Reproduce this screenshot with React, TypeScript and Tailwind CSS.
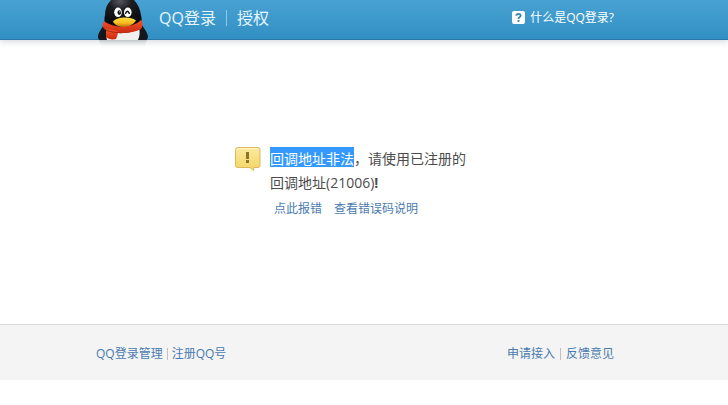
import React from 'react';

const linkStyle = 'text-[#4a7bb0] hover:underline';

function Penguin() {
  return (
    <svg className="w-[50px] h-12 shrink-0" viewBox="0 0 50 48" role="img" aria-label="QQ">
      <defs>
        <radialGradient id="head" cx="42%" cy="5%" r="75%">
          <stop offset="0" stopColor="#54585c" />
          <stop offset="0.4" stopColor="#1c1e22" />
          <stop offset="1" stopColor="#0b0c10" />
        </radialGradient>
        <linearGradient id="beak" x1="0" y1="0" x2="0" y2="1">
          <stop offset="0" stopColor="#ffdd3c" />
          <stop offset="0.6" stopColor="#f9b91e" />
          <stop offset="1" stopColor="#b8690a" />
        </linearGradient>
        <linearGradient id="scarf" x1="0" y1="0" x2="0" y2="1">
          <stop offset="0" stopColor="#f4532a" />
          <stop offset="1" stopColor="#cb2a10" />
        </linearGradient>
        <linearGradient id="reflection" x1="0" y1="0" x2="0" y2="1">
          <stop offset="0" stopColor="#a9b0b4" stopOpacity="0.6" />
          <stop offset="1" stopColor="#ffffff" stopOpacity="0" />
        </linearGradient>
      </defs>
      {/* wings and body */}
      <path d="M7 24C3 29 0 33 0 37C0 38 1 40 2 40H48C49 40 50 38 50 36C49 32 46 28 43 24Z" fill="#15171b" />
      <path d="M13 0C9 4 7 9 7 15C6 19 6 23 8 27H42C44 23 44 19 43 15C42 9 40 4 36 0Z" fill="url(#head)" />
      {/* belly */}
      <path d="M9 30C8 34 8 37 9 40H40C42 36 42 31 41 28C33 34 18 35 9 30Z" fill="#f1f1f2" />
      {/* eyes */}
      <ellipse cx="20" cy="12.3" rx="3.8" ry="4.8" fill="#fff" />
      <ellipse cx="29.8" cy="12.3" rx="3.8" ry="4.8" fill="#fff" />
      <ellipse cx="21.3" cy="12.6" rx="1.8" ry="2.4" fill="#111" />
      <circle cx="21.8" cy="11.8" r="0.6" fill="#fff" />
      <path d="M27.7 13.3Q29 9.3 31.3 13.3" fill="none" stroke="#111" strokeWidth="1.5" strokeLinecap="round" />
      {/* scarf */}
      <path d="M6 21C14 28 34 29 43 20C45 22 45 27 43 29C34 34 17 34 8 30C4 28 4 24 6 21Z" fill="url(#scarf)" />
      <path d="M9 29L20 31C20 34 19 37 18 39C14 40 10 39 8 37C8 34 8 31 9 29Z" fill="url(#scarf)" />
      <path d="M9 30.5Q14 32.5 20 32.5" fill="none" stroke="#97200e" strokeWidth="0.8" />
      {/* beak */}
      <path d="M15 21.5C19 17 32 16 38 20.5C35 25 30 27 26 27C21 27 17 25.5 15 21.5Z" fill="url(#beak)" />
      <path d="M1 40H49L46 48H4Z" fill="url(#reflection)" />
    </svg>
  );
}

function HelpIcon() {
  return (
    <svg className="w-[13px] h-[13px]" viewBox="0 0 13 13" aria-hidden="true">
      <rect width="13" height="13" rx="2" fill="#fff" />
      <path d="M4.3 4.8Q4.3 3 6.5 3T8.7 4.7C8.7 6 6.5 6.1 6.5 7.9" fill="none" stroke="#3b88ba" strokeWidth="1.8" />
      <rect x="5.5" y="9" width="2" height="1.8" fill="#3b88ba" />
    </svg>
  );
}

function WarningIcon() {
  return (
    <svg className="w-[26px] h-6 shrink-0" viewBox="0 0 26 24" aria-hidden="true">
      <defs>
        <linearGradient id="bubble" x1="0" y1="0" x2="0" y2="1">
          <stop offset="0" stopColor="#fbeaa0" />
          <stop offset="1" stopColor="#f3d565" />
        </linearGradient>
      </defs>
      <path
        d="M2.5 0.5H23Q25 0.5 25 2.5V18.5Q25 20.5 23 20.5H19L18.5 23.5L15 20.5H2.5Q0.5 20.5 0.5 18.5V2.5Q0.5 0.5 2.5 0.5Z"
        fill="url(#bubble)"
        stroke="#dcb95c"
      />
      <path d="M2.5 1.5H23" stroke="#fff5cc" />
      <path d="M11 5H14V12H11Z" fill="#8d7528" />
      <rect x="11" y="13" width="3" height="3" fill="#8d7528" />
    </svg>
  );
}

export default function App() {
  return (
    <div className="min-h-screen bg-white font-['Open_Sans','Noto_Sans_CJK_SC',sans-serif] text-xs">
      <header className="h-10 border-b border-[#2877a8] bg-linear-to-b from-[#48a2d3] to-[#328fc3] shadow-[0_2px_6px_rgba(90,110,120,0.25)] pl-[98px] pr-[114px] flex items-start justify-between text-white">
        <div className="flex items-start">
          <Penguin />
          <h1 className="ml-[11px] h-9 flex items-center text-base leading-6 text-[#e6f6ff]">
            <span>QQ登录</span>
            <span className="mx-2.5 w-px h-4 bg-[#8cc8e8]" />
            <span>授权</span>
          </h1>
        </div>
        <a href="#about" className="h-[35px] flex items-center gap-[5px] hover:underline">
          <HelpIcon />
          什么是QQ登录?
        </a>
      </header>

      <main className="h-[284px] pt-[107px] pl-[235px] flex items-start gap-[9px]">
        <WarningIcon />
        <div>
          <p className="text-sm leading-6 text-[#4c4c4c]">
            <mark className="bg-[#3399ff] text-white inline-block h-5 leading-6 align-top">回调地址非法</mark>，请使用已注册的
            <br />
            回调地址(21006)<b>!</b>
          </p>
          <div className="pt-0.5 pl-1 flex gap-3 leading-6">
            <a href="#report" className={linkStyle}>点此报错</a>
            <a href="#codes" className={linkStyle}>查看错误码说明</a>
          </div>
        </div>
      </main>

      <footer className="h-14 border-t border-[#dcdcdc] bg-[#f4f4f4] pt-0.5 pl-24 pr-[114px] flex items-center justify-between">
        <nav className="flex items-center gap-1">
          <a href="#manage" className={linkStyle}>QQ登录管理</a>
          <span className="w-px h-3 bg-[#c9bfb8]" />
          <a href="#register" className={linkStyle}>注册QQ号</a>
        </nav>
        <nav className="flex items-center gap-[5px]">
          <a href="#apply" className={linkStyle}>申请接入</a>
          <span className="w-px h-3 bg-[#c9bfb8]" />
          <a href="#feedback" className={linkStyle}>反馈意见</a>
        </nav>
      </footer>
    </div>
  );
}
